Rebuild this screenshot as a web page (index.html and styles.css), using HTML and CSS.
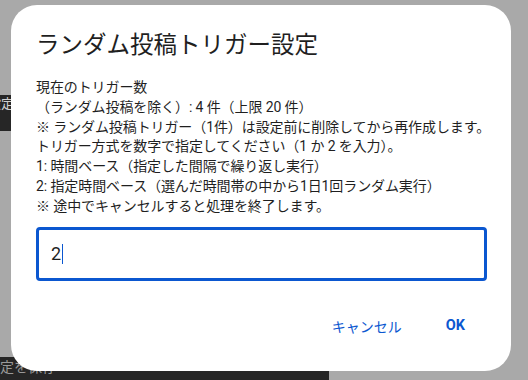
FILE: index.html
```html
<!DOCTYPE html>
<html lang="ja">
<head>
  <meta charset="UTF-8">
  <meta name="viewport" content="width=device-width, initial-scale=1.0">
  <title>ランダム投稿トリガー設定</title>
  <link rel="stylesheet" href="styles.css">
</head>
<body>

  <div class="toast-left">設定<br>：</div>
  <div class="bottom-bar">設定を保存</div>

  <div class="overlay">
    <div class="dialog">
      <h2 class="dialog-title">ランダム投稿トリガー設定</h2>
      <div class="dialog-body">
        現在のトリガー数<br>
        （ランダム投稿を除く）: 4 件（上限 20 件）<br>
        ※ ランダム投稿トリガー（1件）は設定前に削除してから再作成します。<br>
        トリガー方式を数字で指定してください（1 か 2 を入力）。<br>
        1: 時間ベース（指定した間隔で繰り返し実行）<br>
        2: 指定時間ベース（選んだ時間帯の中から1日1回ランダム実行）<br>
        ※ 途中でキャンセルすると処理を終了します。
      </div>
      <div class="input-box"><span class="input-value">2</span><span class="caret"></span></div>
      <div class="actions">
        <button class="btn btn-cancel">キャンセル</button>
        <button class="btn btn-ok">OK</button>
      </div>
    </div>
  </div>

</body>
</html>
```

FILE: styles.css
```css
html, body {
  margin: 0;
  padding: 0;
  height: 100%;
}
body {
  font-family: Roboto, "Noto Sans CJK JP", sans-serif;
  background-color: #a9a9a9;
  position: relative;
  overflow: hidden;
}
.toast-left {
  position: absolute;
  top: 95px;
  left: -14px;
  width: 40px;
  height: 36px;
  background-color: #262626;
  color: #d0d0d0;
  font-size: 13px;
  line-height: 18px;
  padding-left: 2px;
}
.bottom-bar {
  position: absolute;
  left: 0;
  bottom: 0;
  width: 329px;
  height: 23px;
  background-color: #262626;
  color: #9a9a9a;
  font-size: 14px;
  line-height: 20px;
  box-sizing: border-box;
  text-indent: -14px;
}
.overlay {
  position: absolute;
  top: 0;
  left: 0;
  width: 100%;
  height: 100%;
}
.dialog {
  position: absolute;
  top: 5px;
  left: 11px;
  width: 500px;
  height: 366px;
  box-sizing: border-box;
  background-color: #fff;
  border-radius: 26px;
  padding: 24px 14px 0 25px;
  color: #1f1f1f;
}
.dialog-title {
  margin: 0;
  font-size: 23.5px;
  font-weight: 400;
  line-height: 32px;
  color: #1f1f1f;
}
.dialog-body {
  margin-top: 17px;
  font-size: 14px;
  line-height: 19.8px;
  color: #1f1f1f;
  white-space: nowrap;
  letter-spacing: -0.1px;
}
.input-box {
  margin-top: 10px;
  width: 451px;
  height: 54px;
  box-sizing: border-box;
  border: 3px solid #0b57d0;
  border-radius: 4px;
  display: flex;
  align-items: center;
  padding-left: 12px;
}
.input-value {
  font-size: 18px;
  color: #1f1f1f;
}
.caret {
  display: inline-block;
  width: 1px;
  height: 20px;
  background-color: #0b57d0;
  margin-left: 1px;
}
.actions {
  display: flex;
  justify-content: flex-end;
  margin-top: 27px;
  padding-right: 20px;
}
.btn {
  font-family: Roboto, "Noto Sans CJK JP", sans-serif;
  background: none;
  border: none;
  color: #0b57d0;
  font-size: 14px;
  height: 36px;
  padding: 0 12px;
  cursor: pointer;
}
.btn-cancel {
  margin-right: 20px;
}
.btn-ok {
  font-weight: 700;
  font-size: 14.5px;
}
```
